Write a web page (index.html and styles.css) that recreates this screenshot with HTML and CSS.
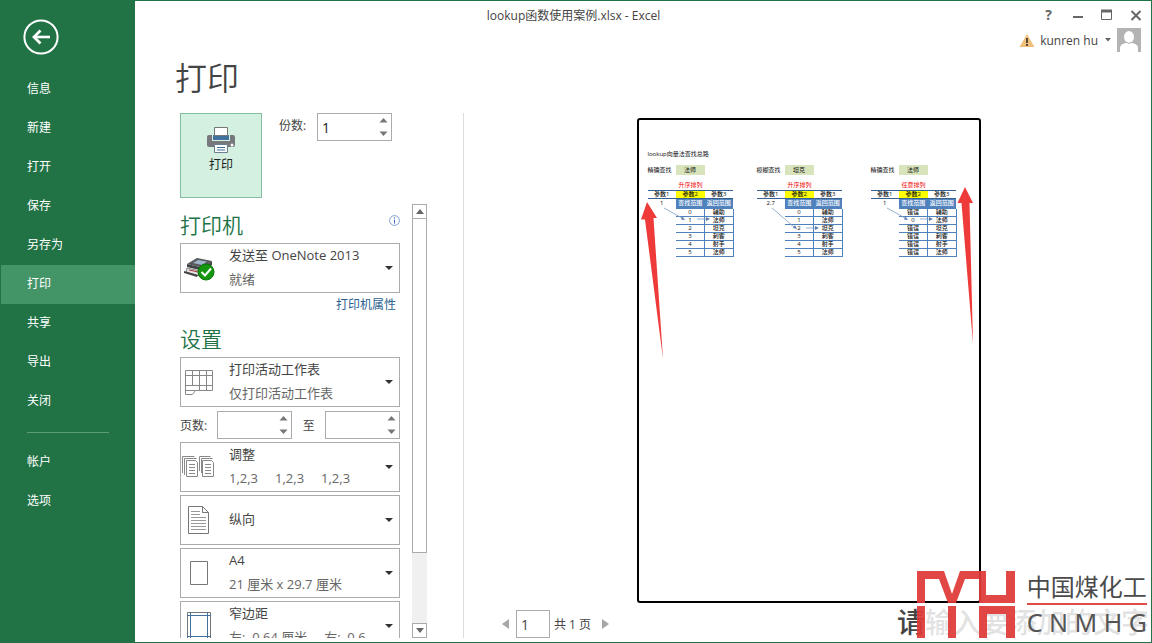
FILE: index.html
```html
<!DOCTYPE html>
<html lang="zh-CN">
<head>
<meta charset="utf-8">
<title>lookup函数使用案例.xlsx - Excel</title>
<link rel="stylesheet" href="styles.css">
</head>
<body>
<div class="window">
  <nav class="sidebar">
    <button class="back" aria-label="返回">
      <svg width="36" height="36" viewBox="0 0 36 36" fill="none" stroke="#fff"><circle cx="18" cy="18" r="16.6" stroke-width="2"/><path d="M11 18h16" stroke-width="2.6"/><path d="M17.5 11.5L11 18l6.500 6.500" stroke-width="2.800"/></svg>
    </button>
    <a class="nav-item" href="#">信息</a>
    <a class="nav-item" href="#">新建</a>
    <a class="nav-item" href="#">打开</a>
    <a class="nav-item" href="#">保存</a>
    <a class="nav-item" href="#">另存为</a>
    <a class="nav-item active" href="#">打印</a>
    <a class="nav-item" href="#">共享</a>
    <a class="nav-item" href="#">导出</a>
    <a class="nav-item" href="#">关闭</a>
    <hr class="nav-rule">
    <a class="nav-item" href="#">帐户</a>
    <a class="nav-item" href="#">选项</a>
  </nav>

  <main class="main">
    <header class="titlebar">
      <div class="doc-title">lookup函数使用案例.xlsx - Excel</div>
      <div class="controls">
        <button class="control help" aria-label="帮助">?</button>
        <button class="control" aria-label="最小化"><svg width="12" height="12"><path d="M1 8h10" stroke="#666" stroke-width="2"/></svg></button>
        <button class="control" aria-label="最大化"><svg width="12" height="12"><path d="M.5 1v9.500h10V1" fill="none" stroke="#666"/><path d="M0 2h11" stroke="#666" stroke-width="3"/></svg></button>
        <button class="control" aria-label="关闭"><svg width="12" height="12"><path d="M1.500 2l9 9M10.500 2l-9 9" stroke="#666" stroke-width="2"/></svg></button>
      </div>
    </header>
    <div class="account">
      <svg width="16" height="15" viewBox="0 0 16 15"><path d="M8 1L15.500 14H.5z" fill="#f0c17c"/><path d="M8 5v5M8 11v2" stroke="#5a4632" stroke-width="2"/></svg>
      <button class="user">kunren hu <svg width="6" height="4"><path d="M0 0h6L3 3.500z" fill="#666"/></svg></button>
      <svg width="24" height="24" viewBox="0 0 24 24"><path d="M0 0h24v24H0z" fill="#b3b3b3"/><ellipse cx="12" cy="9" rx="5" ry="6" fill="#fff"/><path d="M3 24v-4c0-3 3-4.500 6-5h6c3 .5 6 2 6 5v4z" fill="#fff"/><path d="M9 14q3 3 6 0" fill="none" stroke="#b3b3b3"/></svg>
    </div>
    <h1 class="page-title">打印</h1>

    <div class="content">
      <section class="settings">
        <div class="print-row">
          <button class="print-button">
            <svg width="28" height="26" viewBox="0 0 28 26"><path d="M2 8h24q2 0 2 2v8q0 2-2 2H2q-2 0-2-2v-8q0-2 2-2z" fill="#77787b"/><path d="M5 7h18v7H5z" fill="#d5f0e3"/><path d="M6 8h16v5H6z" fill="#41719c"/><path d="M7.500.5h13v8h-13z" fill="#fff" stroke="#777"/><path d="M7.500 17.500h13v8h-13z" fill="#fff" stroke="#6b7f92"/><path d="M10 20.500h8M10 23h8" stroke="#41719c"/><circle cx="25" cy="18" r="1.500" fill="#fff"/></svg>
            <span>打印</span>
          </button>
          <label class="copies-label" for="copies">份数:</label>
          <div class="spinner"><input id="copies" type="text" value="1"><svg class="arrows" width="9" height="18"><path d="M.5 4.500L4.500 0l4 4.500zM.5 13.500l4 4.500 4-4.500z" fill="#777"/></svg></div>
        </div>

        <div class="scroll-row">
          <div class="options">
            <div class="section-head"><h2>打印机</h2>
              <svg class="info" width="11" height="11" viewBox="0 0 11 11"><circle cx="5.500" cy="5.500" r="4.900" fill="none" stroke="#7d9fd0"/><path d="M5.500 2.300v1.400M5.500 4.800v3.800" stroke="#3c70b8"/></svg>
            </div>
            <button class="option">
              <span class="icon"><svg width="32" height="26" viewBox="0 0 32 26"><path d="M4 9L14 3l15 3-8 7z" fill="#56595c"/><path d="M10 8l5-3 9 1.500-5 3.500z" fill="#9db4c9"/><path d="M4 9l17 4 8-7v4l-8 6-17-4z" fill="#3f4245"/><path d="M4 13l13 3v5L3 17z" fill="#e4e4e4" stroke="#666" stroke-width=".8"/><path d="M1 16l14 4-1 2L1 18z" fill="#444"/><path d="M6 15l9 2" stroke="#a33"/><circle cx="23" cy="17" r="8" fill="#14960f" stroke="#087508"/><path d="M18.500 17l3.500 3.500 6-7" fill="none" stroke="#fff" stroke-width="2"/></svg></span>
              <span class="text"><span>发送至 OneNote 2013</span><span class="sub">就绪</span></span><span class="caret"></span>
            </button>
            <div class="link-row"><a href="#">打印机属性</a></div>
            <div class="section-head tall"><h2>设置</h2></div>
            <div class="stack">
              <button class="option">
                <span class="icon"><svg width="32" height="28" viewBox="0 0 32 28" fill="none" stroke="#888"><path d="M2.500 2.500h27v20h-17l-3 4h-7zM2.500 7.500h27M2.500 17.500h27M9.500 2.500v15M16.500 2.500v20M23.500 2.500v20M2.500 22.500h10"/></svg></span>
                <span class="text"><span>打印活动工作表</span><span class="sub">仅打印活动工作表</span></span><span class="caret"></span>
              </button>
              <div class="pages">
                <label for="from">页数:</label>
                <div class="spinner"><input id="from" type="text"><svg class="arrows" width="9" height="18"><path d="M.5 4.500L4.500 0l4 4.500zM.5 13.500l4 4.500 4-4.500z" fill="#777"/></svg></div>
                <label for="to">至</label>
                <div class="spinner"><input id="to" type="text"><svg class="arrows" width="9" height="18"><path d="M.5 4.500L4.500 0l4 4.500zM.5 13.500l4 4.500 4-4.500z" fill="#777"/></svg></div>
              </div>
              <button class="option">
                <span class="icon"><svg width="34" height="22" viewBox="0 0 34 22" fill="none" stroke="#888"><path d="M.5 17V.5h12M2.500 19V2.500h12M4.500 4.500h9l2 2v14h-11zM7 8.500h6M7 11.500h6M7 14.500h6M7 17.500h6M17.500 15V.5h11M19.500 17V2.500h11M20.500 4.500h9l2 2v14h-11zM23 8.500h6M23 11.500h6M23 14.500h6M23 17.500h6"/></svg></span>
                <span class="text"><span>调整</span><span class="sub runs"><span>1,2,3</span><span>1,2,3</span><span>1,2,3</span></span></span><span class="caret"></span>
              </button>
              <button class="option">
                <span class="icon"><svg width="22" height="28" viewBox="0 0 22 28" fill="none" stroke="#777"><path d="M.5.5h14l6 6v21H.5zM14.500.5v6h6"/><path d="M3 5.500h9M3 8.500h9M3 11.500h15M3 14.500h15M3 17.500h15M3 20.500h15M3 23.500h15" stroke="#999"/></svg></span>
                <span class="text"><span>纵向</span></span><span class="caret"></span>
              </button>
              <button class="option">
                <span class="icon"><svg width="18" height="24"><path d="M.5.5h17v23H.5z" fill="none" stroke="#777"/></svg></span>
                <span class="text"><span>A4</span><span class="sub">21 厘米 x 29.7 厘米</span></span><span class="caret"></span>
              </button>
              <button class="option">
                <span class="icon"><svg width="24" height="28" viewBox="0 0 24 28" fill="none"><path d="M.5.5h23v27H.5z" stroke="#777"/><path d="M3.500 0v28M20.500 0v28M0 3.500h24M0 24.500h24" stroke="#41719c"/></svg></span>
                <span class="text"><span>窄边距</span><span class="sub">左:&nbsp; 0.64 厘米&nbsp;&nbsp;&nbsp;&nbsp; 右:&nbsp; 0.6</span></span><span class="caret"></span>
              </button>
            </div>
          </div>
          <div class="scrollbar">
            <button class="sb-button" aria-label="向上"><svg width="8" height="5"><path d="M0 5L4 0l4 5z" fill="#666"/></svg></button>
            <div class="sb-thumb"></div>
            <div class="sb-track"></div>
            <button class="sb-button" aria-label="向下"><svg width="8" height="5"><path d="M0 0h8L4 5z" fill="#666"/></svg></button>
          </div>
        </div>
      </section>

      <section class="preview">
        <div class="sheet">
          <div class="sheet-title">lookup向量法查找总路</div>
          <div class="blocks">
            <div class="block">
              <div class="query"><span>精确查找</span><span class="hit">法师</span></div>
              <table>
                <caption>升序排列</caption>
                <tr class="params"><td>参数1</td><td class="key">参数2</td><td>参数3</td></tr>
                <tr class="heads"><td>1</td><th>查找范围</th><th>返回范围</th></tr>
                <tr><td></td><td>0</td><td>辅助</td></tr>
                <tr><td></td><td>1</td><td>法师</td></tr>
                <tr><td></td><td>2</td><td>坦克</td></tr>
                <tr><td></td><td>3</td><td>刺客</td></tr>
                <tr><td></td><td>4</td><td>射手</td></tr>
                <tr><td></td><td>5</td><td>法师</td></tr>
              </table>
              <svg class="trace" width="86" height="92" viewBox="0 0 86 92" stroke="#7f9cc0" fill="#5f7fae" stroke-width=".8"><path d="M16 43L34 53M49 54H59"/><path d="M37 55l-4-.5 1.500-3zM62 54l-4-2v4z" stroke="none"/></svg>
            </div>
            <div class="block">
              <div class="query"><span>模糊查找</span><span class="hit">坦克</span></div>
              <table>
                <caption>升序排列</caption>
                <tr class="params"><td>参数1</td><td class="key">参数2</td><td>参数3</td></tr>
                <tr class="heads"><td>2.7</td><th>查找范围</th><th>返回范围</th></tr>
                <tr><td></td><td>0</td><td>辅助</td></tr>
                <tr><td></td><td>1</td><td>法师</td></tr>
                <tr><td></td><td>2</td><td>坦克</td></tr>
                <tr><td></td><td>3</td><td>刺客</td></tr>
                <tr><td></td><td>4</td><td>射手</td></tr>
                <tr><td></td><td>5</td><td>法师</td></tr>
              </table>
              <svg class="trace" width="86" height="92" viewBox="0 0 86 92" stroke="#7f9cc0" fill="#5f7fae" stroke-width=".8"><path d="M15 43L37 62M49 63H59"/><path d="M40 64l-4-1 2-3zM62 63l-4-2v4z" stroke="none"/></svg>
            </div>
            <div class="block">
              <div class="query"><span>精确查找</span><span class="hit">法师</span></div>
              <table>
                <caption>任意排列</caption>
                <tr class="params"><td>参数1</td><td class="key">参数2</td><td>参数3</td></tr>
                <tr class="heads"><td>1</td><th>查找范围</th><th>返回范围</th></tr>
                <tr><td></td><td>错误</td><td>辅助</td></tr>
                <tr><td></td><td>0</td><td>法师</td></tr>
                <tr><td></td><td>错误</td><td>坦克</td></tr>
                <tr><td></td><td>错误</td><td>刺客</td></tr>
                <tr><td></td><td>错误</td><td>射手</td></tr>
                <tr><td></td><td>错误</td><td>法师</td></tr>
              </table>
              <svg class="trace" width="86" height="92" viewBox="0 0 86 92" stroke="#7f9cc0" fill="#5f7fae" stroke-width=".8"><path d="M16 43L34 53M49 54H59"/><path d="M37 55l-4-.5 1.500-3zM62 54l-4-2v4z" stroke="none"/></svg>
            </div>
          </div>
          <svg class="marks" width="340" height="242" viewBox="0 0 340 242" fill="#ef3a3a"><path d="M8 82L18 98H14.500L24 239 6 99.500H2z"/><path d="M326 67L334 83H330.500L334 224 322.500 83H318.500z"/></svg>
        </div>
        <div class="pager">
          <button class="page-nav" aria-label="上一页"><svg width="7" height="10"><path d="M7 0v10L0 5z" fill="#a6a6a6"/></svg></button>
          <input class="page-input" id="page" type="text" value="1">
          <label for="page">共 1 页</label>
          <button class="page-nav" aria-label="下一页"><svg width="7" height="10"><path d="M0 0v10l7-5z" fill="#a6a6a6"/></svg></button>
        </div>
      </section>
    </div>
  </main>

  <div class="caption-hint"><span class="first">请</span>输入要添加的文字</div>
  <div class="watermark">
    <svg width="98" height="67" viewBox="0 0 98 67" fill="#df3a37" fill-opacity=".93"><path d="M0 32V0h27l8 23L43 0h26v24h20V0h9v32H62V8H48L39 32h-8L22 8H8v24z"/><path d="M0 35h8v32H0zM31 35h8v32h-8zM62 35h36v32h-9V43H70v24h-8z"/></svg>
    <div class="brand"><div class="brand-cn">中国煤化工</div><div class="brand-en">C N M H G</div></div>
  </div>
</div>
</body>
</html>
```
FILE: styles.css
```css
* { box-sizing: border-box; }

body {
  margin: 0;
  font-family: "Open Sans", "Noto Sans CJK SC", sans-serif;
  font-size: 13px;
  color: #444;
  background: #fff;
}

button, input { font: inherit; color: inherit; border-radius: 0; }
button { padding: 0; border: 0; background: none; }
svg { display: block; flex: none; }
h1, h2 { margin: 0; font-weight: 350; }

.window {
  position: relative;
  display: flex;
  height: 100vh;
  border: 1px solid #217346;
  overflow: hidden;
}

/* Sidebar */
.sidebar {
  flex: none;
  width: 134px;
  background: #217346;
  display: flex;
  flex-direction: column;
}
.back { align-self: flex-start; margin: 18px 0 15px 22px; }
.nav-item {
  height: 39px;
  padding-left: 26px;
  line-height: 38px;
  font-size: 12px;
  color: #fff;
  text-decoration: none;
}
.nav-item.active { background: #439467; }
.nav-rule {
  width: 82px;
  margin: 11px 0 10px 26px;
  border: 0;
  border-top: 1px solid #5b9b78;
}

/* Main column */
.main {
  flex: 1;
  min-width: 0;
  display: flex;
  flex-direction: column;
  padding-bottom: 4px;
}
.titlebar {
  display: grid;
  grid-template-columns: 1fr 139px;
  align-items: center;
  height: 27px;
}
.doc-title { text-align: center; font-size: 12px; }
.controls { display: flex; justify-content: flex-end; padding-right: 1px; }
.control {
  display: flex;
  align-items: center;
  justify-content: center;
  width: 29px;
  height: 27px;
}
.help { font-size: 14px; font-weight: 700; color: #666; }
.account {
  display: flex;
  justify-content: flex-end;
  align-items: center;
  gap: 5px;
  height: 24px;
  padding-right: 10px;
}
.user { display: flex; align-items: center; gap: 7px; margin-right: 1px; font-size: 12px; }
.page-title {
  padding-left: 40px;
  font-size: 32px;
  line-height: 52px;
  margin-bottom: 9px;
}
.content { flex: 1; min-height: 0; display: flex; }

/* Settings */
.settings {
  flex: none;
  width: 329px;
  padding: 0 36px 0 45px;
  border-right: 1px solid #ddd;
  display: flex;
  flex-direction: column;
}
.print-row { display: flex; align-items: flex-start; height: 91px; }
.print-button {
  display: flex;
  flex-direction: column;
  align-items: center;
  gap: 2px;
  width: 82px;
  height: 85px;
  padding-top: 13px;
  border: 1px solid #86bfa0;
  background: #d3f0e0;
  font-size: 12px;
  color: #222;
}
.copies-label { width: 55px; padding-left: 17px; font-size: 12px; line-height: 26px; white-space: nowrap; }
.spinner {
  display: flex;
  align-items: center;
  width: 75px;
  height: 28px;
  padding-right: 3px;
  border: 1px solid #ababab;
}
.spinner input {
  flex: 1;
  min-width: 0;
  height: 26px;
  padding: 0 4px;
  border: 0;
  background: none;
  font-size: 14px;
  color: #222;
}

.scroll-row { flex: 1; min-height: 0; display: flex; justify-content: space-between; }
.options { width: 220px; overflow: hidden; }
.section-head {
  display: flex;
  justify-content: space-between;
  align-items: center;
  height: 39px;
  padding-top: 2px;
}
.section-head.tall { height: 40px; padding-top: 4px; }
.info { margin: 0 0 8px; }
h2 { font-size: 21px; line-height: 32px; color: #217346; }
.option {
  display: flex;
  align-items: center;
  width: 100%;
  height: 50px;
  padding-right: 6px;
  border: 1px solid #ababab;
  text-align: left;
}
.icon { flex: none; display: flex; justify-content: center; width: 36px; }
.text { flex: 1; min-width: 0; padding: 0 0 2px 12px; line-height: 24px; white-space: nowrap; }
.text > span { display: block; }
.text .sub { color: #666; }
.text .runs { display: flex; gap: 17px; }
.caret { border: 4px solid transparent; border-top-color: #333; border-bottom: 0; }
.link-row { height: 24px; padding-right: 4px; line-height: 24px; text-align: right; font-size: 12px; }
.link-row a { color: #2b5f8e; text-decoration: none; }
.stack { display: flex; flex-direction: column; gap: 3px; }
.stack .option { flex: none; }
.pages { display: flex; align-items: center; justify-content: space-between; height: 29px; font-size: 12px; }

.scrollbar {
  width: 15px;
  display: flex;
  flex-direction: column;
  background: #f0f0f0;
}
.sb-button {
  display: flex;
  align-items: center;
  justify-content: center;
  height: 15px;
  border: 1px solid #ababab;
  background: #fff;
}
.sb-thumb { flex: 332; border: 1px solid #ababab; border-top: 0; background: #fff; }
.sb-track { flex: 70; }

/* Preview */
.preview {
  flex: 1;
  min-width: 0;
  display: flex;
  flex-direction: column;
  justify-content: space-between;
  padding-top: 5px;
}
.sheet {
  position: relative;
  align-self: center;
  width: 344px;
  aspect-ratio: 344 / 485;
  margin-left: 2px;
  padding: 29px 9px 0;
  border: 2px solid #000;
  border-radius: 3px;
  font-size: 6px;
  line-height: 8px;
  color: #111;
  white-space: nowrap;
}
.sheet-title { line-height: 10px; }
.blocks { display: grid; grid-template-columns: 109px 114px 86px; padding-top: 6px; }
.block { position: relative; width: 86px; }
.query { display: grid; grid-template-columns: 28px 29px; line-height: 10px; }
.hit { background: #d8e4bc; text-align: center; }
.sheet table {
  width: 86px;
  margin-top: 6px;
  table-layout: fixed;
  border-collapse: collapse;
}
caption { height: 9px; line-height: 9px; color: #e00; }
.sheet td, .sheet th { height: 8px; padding: 0; line-height: 7px; text-align: center; font-weight: 500; overflow: hidden; }
.sheet td + td { border-bottom: 1px solid #4f81bd; }
.sheet td + td + td { border-left: 1px solid #4f81bd; border-right: 1px solid #4f81bd; }
.sheet .params td { border: 0; border-top: 1px solid #376092; border-bottom: 1px solid #376092; }
.sheet .heads td, .sheet .heads th { height: 10px; }
.sheet .key { background: #ff0; }
.sheet th { background: #4f81bd; color: #fff; }
.trace { position: absolute; left: 0; top: 0; }
.marks { position: absolute; left: 0; top: 0; }

.pager { display: flex; align-items: center; padding-left: 38px; font-size: 12px; }
.page-input {
  width: 34px;
  height: 28px;
  margin: 0 4px 0 7px;
  padding: 0 4px;
  border: 1px solid #ababab;
  font-size: 14px;
}
.pager label { margin-right: 11px; }

/* Overlaid branding */
.watermark {
  position: absolute;
  right: 4px;
  bottom: 3px;
  display: flex;
  align-items: flex-start;
  gap: 12px;
}
.brand { font-family: "Noto Sans", "Noto Sans CJK SC", sans-serif; color: #4a4a4a; white-space: nowrap; }
.brand-cn { font-size: 24px; line-height: 32px; border-bottom: 2px solid #df4a47; }
.brand-en { font-size: 25px; line-height: 34px; color: #555; }
.caption-hint {
  position: absolute;
  right: 2px;
  bottom: 2px;
  font-size: 28px;
  line-height: 36px;
  font-weight: 500;
  color: rgba(190, 190, 190, 0.45);
  white-space: nowrap;
}
.caption-hint .first { color: #444; }
```
